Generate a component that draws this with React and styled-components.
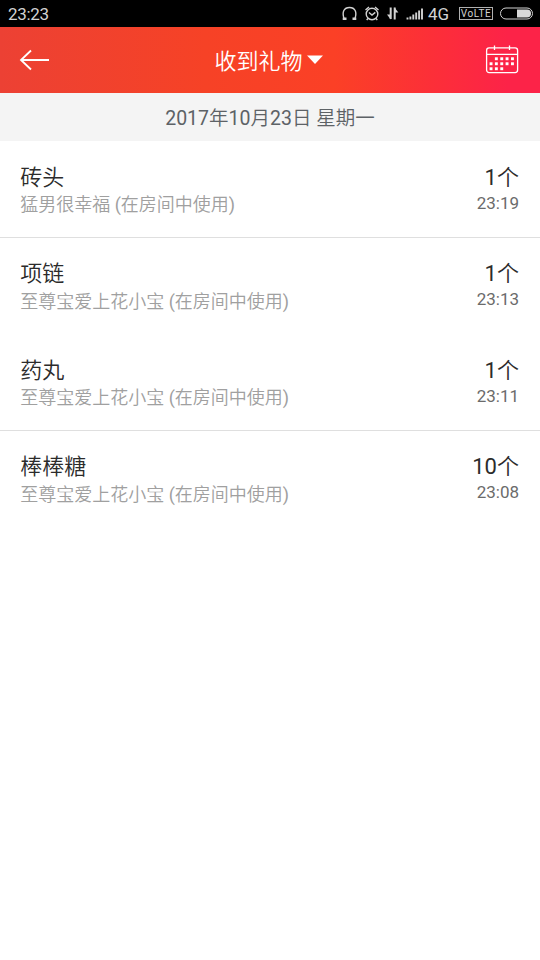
import React from "react";
import styled, { createGlobalStyle } from "styled-components";

const GlobalStyle = createGlobalStyle`
  * { box-sizing: border-box; }
  body {
    margin: 0;
    background: #fff;
    font-family: Roboto, "Noto Sans CJK SC", sans-serif;
    font-weight: 350;
  }
`;

const Screen = styled.div`
  width: 540px;
  height: 960px;
  overflow: hidden;
  background: #fff;
`;

const StatusBar = styled.header`
  height: 27px;
  padding: 0 7px 0 8px;
  display: flex;
  justify-content: space-between;
  align-items: center;
  background: #000;
  color: #d2d2d2;
  font-size: 17px;
  font-weight: 400;
  line-height: 27px;
`;

const Clock = styled.span`
  letter-spacing: -0.35px;
  padding-top: 1px;
`;

const StatusIcons = styled.div`
  display: flex;
  align-items: center;
  height: 27px;
  svg { display: block; }
`;

const Network = styled.span`
  margin-left: 4px;
  padding-top: 1px;
  width: 23px;
  white-space: nowrap;
`;

const VolteTag = styled.span`
  margin: 0 0 0 8px;
  width: 34px;
  height: 13px;
  border: 1px solid #b0b0b0;
  font-size: 10px;
  line-height: 12px;
  letter-spacing: 0.6px;
  text-align: center;
`;

const NavBar = styled.nav`
  height: 66px;
  padding: 0 21px 0 19px;
  display: grid;
  grid-template-columns: 34px 1fr 34px;
  align-items: center;
  background: linear-gradient(90deg, #ec4134 0%, #f64226 38%, #fb4026 62%, #fc2f38 80%, #fc2348 94%);
  color: #fff;
`;

const IconButton = styled.button`
  padding: 0;
  border: 0;
  background: none;
  color: inherit;
  display: flex;
  svg { display: block; }
`;

const NavTitle = styled.h1`
  margin: 0;
  padding: 3px 0 0 0;
  display: flex;
  justify-content: center;
  align-items: center;
  gap: 3px;
  font-size: 22px;
  font-weight: 350;
  line-height: 32px;
  svg { margin-top: -4px; }
`;

const DateHeader = styled.div`
  height: 48px;
  padding-top: 2px;
  background: #f4f4f4;
  color: #5d6266;
  text-align: center;
  font-size: 19.5px;
  line-height: 48px;
`;

const Latin = styled.span`
  font-weight: 400;
`;

const GiftList = styled.ul`
  margin: 0;
  padding: 0;
  list-style: none;
`;

const GiftRow = styled.li`
  height: 96.5px;
  padding: 22.9px 21px 0 20.2px;
  display: flex;
  justify-content: space-between;
  border-bottom: 1px solid ${(p) => (p.$divided ? "#dfdfdf" : "transparent")};
`;

const Details = styled.div`
  text-align: ${(p) => (p.$end ? "right" : "left")};
`;

const Primary = styled.div`
  font-size: 22px;
  line-height: 27px;
  color: #2b2b2b;
`;

const Sender = styled.div`
  padding-top: 0.2px;
  font-size: 18px;
  line-height: 27px;
  color: #a0a0a0;
`;

const Time = styled.div`
  font-size: 17px;
  font-weight: 400;
  line-height: 25px;
  color: #6b6b6b;
`;

const gifts = [
  { name: "砖头", from: "猛男很幸福", count: "1个", time: "23:19", divided: true },
  { name: "项链", from: "至尊宝爱上花小宝", count: "1个", time: "23:13", divided: false },
  { name: "药丸", from: "至尊宝爱上花小宝", count: "1个", time: "23:11", divided: true },
  { name: "棒棒糖", from: "至尊宝爱上花小宝", count: "10个", time: "23:08", divided: false },
];

const dots = [
  [9.9, 12.3], [15.3, 12.3], [20.6, 12.3], [26, 12.3],
  [4.6, 17.3], [9.9, 17.3], [15.3, 17.3], [20.6, 17.3], [26, 17.3],
  [4.6, 22.3], [9.9, 22.3], [15.3, 22.3],
];

// Sets digits, brackets and spaces in regular weight beside the lighter Chinese text.
function MixedText({ children }) {
  return children
    .split(/([\d() ]+)/)
    .map((part, i) => (i % 2 ? <Latin key={i}>{part}</Latin> : part));
}

function SystemIcons() {
  return (
    <svg width="83" height="27" viewBox="341 0 83 27" fill="none" stroke="#d2d2d2" strokeWidth="1.4">
      <path d="M344 18.5c-2.2-6.500 0-11 5.500-11s7.700 4.500 5.500 11" />
      <path d="M342.700 18.800h3.800M352.500 18.800h3.800" strokeWidth="2.400" />
      <circle cx="372" cy="14" r="5.800" />
      <path d="M365.500 10l3.500-3M378.500 10l-3.500-3M369 12.500l3 2.500 3.300-2.600M368 18.500l-1.300 1.500M376 18.500l1.300 1.500" />
      <path d="M390.700 7.500v11.500" strokeWidth="2" />
      <path d="M387 14.500h3.700v5zM394.400 7.500v5h4z" fill="#d2d2d2" stroke="none" />
      <path d="M394.700 19.500v-12" strokeWidth="2" />
      <path d="M407.500 19.500v-2M410.400 19.500v-3M413.300 19.500v-5M416.200 19.500v-7M419.100 19.500v-9M422 19.500v-11" strokeWidth="1.900" />
    </svg>
  );
}

function Battery() {
  return (
    <svg width="40" height="27" viewBox="493 0 40 27">
      <rect x="500.500" y="8" width="32" height="11" rx="5.500" fill="none" stroke="#d2d2d2" />
      <path d="M517 9.500h10a4 4 0 0 1 0 8h-10z" fill="#d8d8d8" />
    </svg>
  );
}

function BackArrow() {
  return (
    <svg width="32" height="24" viewBox="0 0 32 24" fill="none" stroke="#fff" strokeWidth="1.8">
      <path d="M30 12H2M12 2.500L2 12l10 9.500" />
    </svg>
  );
}

function CalendarIcon() {
  return (
    <svg width="34" height="30" viewBox="0 0 34 30" fill="none" stroke="#fff" strokeWidth="1.3">
      <rect x="1.600" y="2.900" width="31" height="24.700" rx="2.500" />
      <path d="M1.600 9.300h31M9.500 0.500v4.500M24.500 0.500v4.500" />
      {dots.map(([x, y]) => (
        <rect key={`${x}-${y}`} x={x} y={y} width="2.900" height="2.900" fill="#fff" stroke="none" />
      ))}
    </svg>
  );
}

export default function App() {
  return (
    <Screen>
      <GlobalStyle />
      <StatusBar>
        <Clock>23:23</Clock>
        <StatusIcons>
          <SystemIcons />
          <Network>4G</Network>
          <VolteTag>VoLTE</VolteTag>
          <Battery />
        </StatusIcons>
      </StatusBar>
      <NavBar>
        <IconButton aria-label="返回"><BackArrow /></IconButton>
        <NavTitle>
          收到礼物
          <svg width="18" height="10" viewBox="0 0 18 10"><path d="M1 0.500h16L9 9z" fill="#fff" /></svg>
        </NavTitle>
        <IconButton aria-label="日历"><CalendarIcon /></IconButton>
      </NavBar>
      <DateHeader><MixedText>2017年10月23日 星期一</MixedText></DateHeader>
      <GiftList>
        {gifts.map((gift) => (
          <GiftRow key={gift.time} $divided={gift.divided}>
            <Details>
              <Primary>{gift.name}</Primary>
              <Sender><MixedText>{`${gift.from} (在房间中使用)`}</MixedText></Sender>
            </Details>
            <Details $end>
              <Primary><MixedText>{gift.count}</MixedText></Primary>
              <Time>{gift.time}</Time>
            </Details>
          </GiftRow>
        ))}
      </GiftList>
    </Screen>
  );
}
